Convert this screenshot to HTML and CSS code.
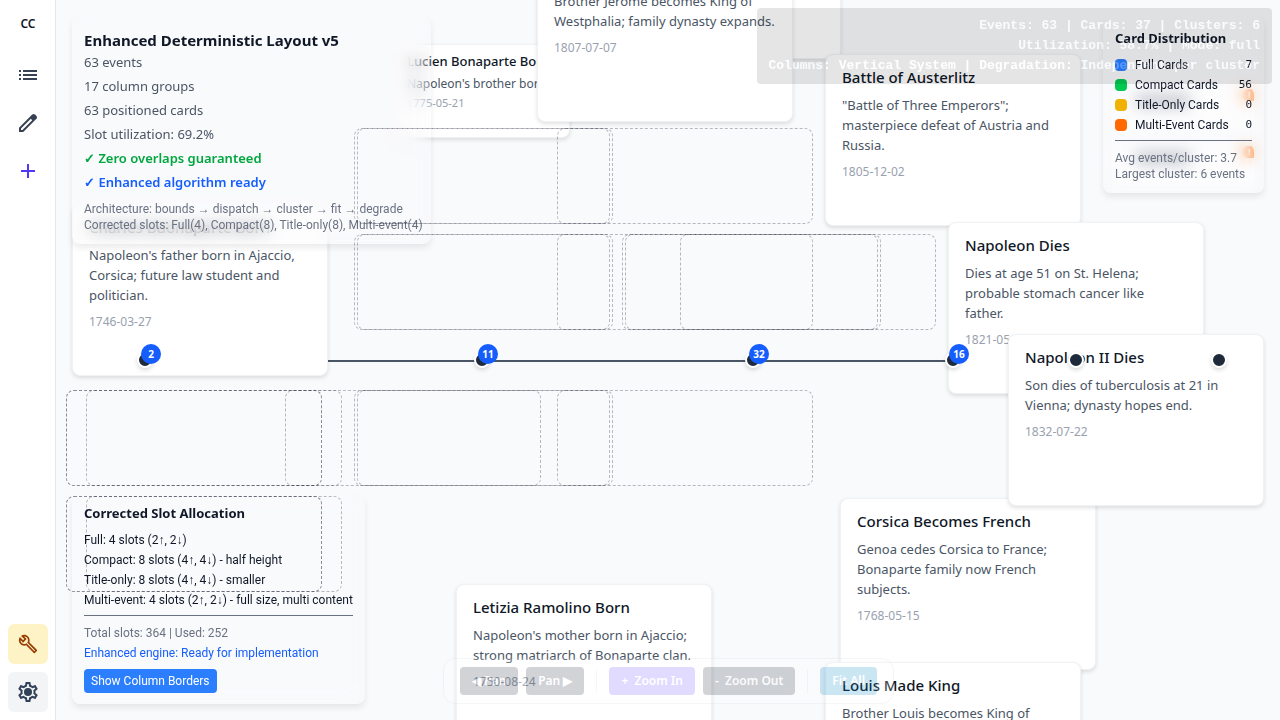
FILE: index.html
```html
<!DOCTYPE html>
<html lang="en">
<head>
<meta charset="utf-8">
<meta name="viewport" content="width=device-width, initial-scale=1">
<title>Timeline</title>
<link rel="stylesheet" href="styles.css">
</head>
<body>
<div class="app">
  <nav class="rail" aria-label="Main">
    <div class="rail-group">
      <span class="brand">CC</span>
      <button class="rail-btn" type="button" aria-label="Events">
        <svg viewBox="0 0 24 24"><path d="M3 7h2v2H3zm0 4h2v2H3zm0 4h2v2H3zM7 7h14v2H7zm0 4h14v2H7zm0 4h14v2H7z"/></svg>
      </button>
      <button class="rail-btn" type="button" aria-label="Edit">
        <svg viewBox="0 0 24 24"><path d="M5 19h1.425L16.2 9.225 14.775 7.8 5 17.575zm-2 2v-4.25L16.2 3.575a2 2 0 0 1 .663-.425q.363-.15.762-.15t.775.15.65.45L20.425 5q.3.275.438.65t.137.75q0 .4-.137.763a1.9 1.9 0 0 1-.438.662L7.25 21z"/></svg>
      </button>
      <button class="rail-btn rail-add" type="button" aria-label="Add event">
        <svg viewBox="0 0 24 24"><path d="M11 13H5v-2h6V5h2v6h6v2h-6v6h-2z"/></svg>
      </button>
    </div>
    <div class="rail-group rail-bottom">
      <button class="rail-btn rail-dev" type="button" aria-label="Developer panel">
        <svg viewBox="0 0 24 24"><path d="M22.61 19l-9.08-9.09c.93-2.34.45-5.1-1.44-7C9.79.61 6.21.4 3.66 2.26L7.5 6.11 6.08 7.52 2.25 3.69C.39 6.23.6 9.82 2.9 12.11c1.86 1.86 4.57 2.35 6.89 1.48l9.11 9.11c.39.39 1.02.39 1.41 0l2.3-2.3c.4-.38.4-1.01 0-1.4zm-3 1.59l-9.46-9.46c-.61.45-1.29.72-2 .82-1.36.2-2.79-.21-3.83-1.25C3.37 9.76 2.93 8.5 3 7.26l3.09 3.09 4.24-4.24-3.09-3.09c1.24-.07 2.49.37 3.44 1.31 1.08 1.08 1.49 2.57 1.24 3.96-.12.71-.42 1.37-.88 1.96l9.45 9.45-.88.89z"/></svg>
      </button>
      <button class="rail-btn rail-settings" type="button" aria-label="Settings">
        <svg viewBox="0 0 24 24"><path d="M19.43 12.98c.04-.32.07-.64.07-.98 0-.34-.03-.66-.07-.98l2.11-1.65c.19-.15.24-.42.12-.64l-2-3.46c-.09-.16-.26-.25-.44-.25-.06 0-.12.01-.17.03l-2.49 1c-.52-.4-1.08-.73-1.69-.98l-.38-2.65C14.46 2.18 14.25 2 14 2h-4c-.25 0-.46.18-.49.42l-.38 2.65c-.61.25-1.17.59-1.69.98l-2.49-1c-.06-.02-.12-.03-.18-.03-.17 0-.34.09-.43.25l-2 3.46c-.13.22-.07.49.12.64l2.11 1.65c-.04.32-.07.65-.07.98s.03.66.07.98l-2.11 1.65c-.19.15-.24.42-.12.64l2 3.46c.09.16.26.25.44.25.06 0 .12-.01.17-.03l2.49-1c.52.4 1.08.73 1.69.98l.38 2.65c.03.24.24.42.49.42h4c.25 0 .46-.18.49-.42l.38-2.65c.61-.25 1.17-.59 1.69-.98l2.49 1c.06.02.12.03.18.03.17 0 .34-.09.43-.25l2-3.46c.12-.22.07-.49-.12-.64l-2.11-1.65zm-1.98-1.71c.04.31.05.52.05.73 0 .21-.02.43-.05.73l-.14 1.13.89.7 1.08.84-.7 1.21-1.27-.51-1.04-.42-.9.68c-.43.32-.84.56-1.25.73l-1.06.43-.16 1.13-.2 1.35h-1.4l-.19-1.35-.16-1.13-1.06-.43c-.43-.18-.83-.41-1.23-.71l-.91-.7-1.06.43-1.27.51-.7-1.21 1.08-.84.89-.7-.14-1.13c-.03-.31-.05-.54-.05-.74s.02-.43.05-.73l.14-1.13-.89-.7-1.08-.84.7-1.21 1.27.51 1.04.42.9-.68c.43-.32.84-.56 1.25-.73l1.06-.43.16-1.13.2-1.35h1.39l.19 1.35.16 1.13 1.06.43c.43.18.83.41 1.23.71l.91.7 1.06-.43 1.27-.51.7 1.21-1.07.85-.89.7.14 1.13z"/><circle cx="12" cy="12" r="4"/></svg>
      </button>
    </div>
  </nav>

  <main class="canvas">
    <div class="axis"></div>

    <article class="card compact at-lucien"><h3>Lucien Bonaparte Born</h3><p>Napoleon's brother born.</p><time>1775-05-21</time></article>
    <article class="card at-back"></article>
    <article class="card at-jerome"><h3>Jerome Made King</h3><p>Brother Jerome becomes King of Westphalia; family dynasty expands.</p><time>1807-07-07</time></article>
    <article class="card at-austerlitz"><h3>Battle of Austerlitz</h3><p>"Battle of Three Emperors"; masterpiece defeat of Austria and Russia.</p><time>1805-12-02</time></article>
    <article class="card at-charles"><h3>Charles Buonaparte Born</h3><p>Napoleon's father born in Ajaccio, Corsica; future law student and politician.</p><time>1746-03-27</time></article>
    <article class="card at-dies"><h3>Napoleon Dies</h3><p>Dies at age 51 on St. Helena; probable stomach cancer like<br>father.</p><time>1821-05-05</time></article>
    <article class="card at-corsica"><h3>Corsica Becomes French</h3><p>Genoa cedes Corsica to France; Bonaparte family now French subjects.</p><time>1768-05-15</time></article>
    <article class="card at-second"><h3>Napoleon II Dies</h3><p>Son dies of tuberculosis at 21 in Vienna; dynasty hopes end.</p><time>1832-07-22</time></article>
    <article class="card at-letizia"><h3>Letizia Ramolino Born</h3><p>Napoleon's mother born in Ajaccio; strong matriarch of Bonaparte clan.</p><time>1750-08-24</time></article>
    <article class="card at-louis"><h3>Louis Made King</h3><p>Brother Louis becomes King of Holland.</p><time>1806-06-05</time></article>
    <div class="mini at-mini-a"><i class="mini-title"></i><b class="flag">!</b></div>
    <div class="mini at-mini-b"><i class="mini-title"></i><b class="flag">!</b></div>

    <span class="node n1"><b>2</b></span>
    <span class="node n2"><b>11</b></span>
    <span class="node n3"><b>32</b></span>
    <span class="node n4"><b>16</b></span>
    <span class="node n5"></span>
    <span class="node n6"></span>

    <section class="panel panel-info">
      <h2>Enhanced Deterministic Layout v5</h2>
      <ul class="stats">
        <li>63 events</li>
        <li>17 column groups</li>
        <li>63 positioned cards</li>
        <li>Slot utilization: 69.2%</li>
        <li class="ok">✓ Zero overlaps guaranteed</li>
        <li class="ready">✓ Enhanced algorithm ready</li>
      </ul>
      <p class="note">Architecture: bounds → dispatch → cluster → fit → degrade<br>Corrected slots: Full(4), Compact(8), Title-only(8), Multi-event(4)</p>
    </section>

    <section class="panel panel-dist">
      <h2>Card Distribution</h2>
      <dl class="dist">
        <div><dt class="full">Full Cards</dt><dd>7</dd></div>
        <div><dt class="comp">Compact Cards</dt><dd>56</dd></div>
        <div><dt class="titl">Title-Only Cards</dt><dd>0</dd></div>
        <div><dt class="mult">Multi-Event Cards</dt><dd>0</dd></div>
      </dl>
      <p class="note ruled">Avg events/cluster: 3.7<br>Largest cluster: 6 events</p>
    </section>

    <section class="panel panel-slots">
      <h2>Corrected Slot Allocation</h2>
      <ul class="alloc">
        <li>Full: 4 slots (2↑, 2↓)</li>
        <li>Compact: 8 slots (4↑, 4↓) - half height</li>
        <li>Title-only: 8 slots (4↑, 4↓) - smaller</li>
        <li>Multi-event: 4 slots (2↑, 2↓) - full size, multi content</li>
      </ul>
      <div class="totals ruled">
        <p>Total slots: 364 | Used: 252</p>
        <p class="ready">Enhanced engine: Ready for implementation</p>
      </div>
      <button class="borders-btn" type="button">Show Column Borders</button>
    </section>

    <i class="slot r1 c354"></i><i class="slot r1 c357"></i><i class="slot r1 c557"></i>
    <i class="slot r2 c354"></i><i class="slot r2 c357"></i><i class="slot r2 c557"></i>
    <i class="slot r2 c622"></i><i class="slot r2 c625"></i><i class="slot r2 c680"></i>
    <i class="slot r3 c66"></i><i class="slot r3 c66"></i><i class="slot r3 c86"></i><i class="slot r3 c285"></i>
    <i class="slot r3 c354"></i><i class="slot r3 c357"></i><i class="slot r3 c557"></i>
    <i class="slot r4 c66"></i><i class="slot r4 c66"></i><i class="slot r4 c86"></i>

    <div class="telemetry">
      <div>Events: 63 | Cards: 37 | Clusters: 6</div>
      <div>Utilization: 58.7% | Mode: full</div>
      <div>Columns: Vertical System | Degradation: Independent per cluster</div>
    </div>

    <div class="toolbar" role="toolbar" aria-label="Timeline navigation">
      <button type="button">◀ Pan</button>
      <button type="button">Pan ▶</button>
      <span class="sep"></span>
      <button type="button" class="in">+&nbsp; Zoom In</button>
      <button type="button">-&nbsp; Zoom Out</button>
      <span class="sep"></span>
      <button type="button" class="fit">Fit All</button>
    </div>
  </main>
</div>
</body>
</html>
```
FILE: styles.css
```css
* { box-sizing: border-box; }
body, h2, h3, p, ul, dl, dd { margin: 0; padding: 0; }
ul { list-style: none; }
body {
  font-family: "Noto Sans", "Open Sans", sans-serif;
  font-size: 13px;
  line-height: 20px;
  color: #101828;
  background: #f9fafc;
}
button { font: inherit; border: 0; padding: 0; cursor: pointer; }

.app { display: flex; height: 100vh; overflow: hidden; }

/* Left rail */
.rail {
  flex: none;
  width: 56px;
  display: flex;
  flex-direction: column;
  justify-content: space-between;
  padding: 8px 7px 8px 8px;
  background: #fff;
  border-right: 1px solid #e5e7eb;
}
.rail-group { display: flex; flex-direction: column; align-items: center; gap: 8px; }
.brand {
  height: 32px;
  margin-bottom: 7px;
  line-height: 32px;
  font-size: 12px;
  font-weight: 600;
}
.rail-btn {
  width: 40px;
  height: 40px;
  display: grid;
  place-items: center;
  border-radius: 6px;
  background: none;
  color: #364153;
}
.rail-btn svg { width: 24px; height: 24px; fill: currentColor; }
.rail-add { color: #4f39f6; }
.rail-dev { background: #fef3c6; color: #973c00; }
.rail-dev svg { width: 20px; height: 20px; }
.rail-settings { background: #f3f4f6; color: #314158; }

/* Timeline canvas */
.canvas { position: relative; flex: 1; min-width: 0; overflow: hidden; }
.axis {
  position: absolute;
  left: 16px;
  right: 16px;
  top: 360px;
  height: 2px;
  background: #4a5565;
}
.card {
  position: absolute;
  width: 256px;
  height: 172px;
  padding: 12px 16px;
  background: #fff;
  border: 1px solid #f0f2f4;
  border-radius: 8px;
  box-shadow: 0 2px 4px rgba(0, 0, 0, .12);
}
.card h3 { font-size: 15px; line-height: 20px; font-weight: 500; margin-bottom: 8px; }
.card p { color: #4a5565; }
.card time { display: block; margin-top: 8px; font-size: 12px; line-height: 18px; color: #99a1af; }
.compact { width: 176px; height: 94px; padding: 6px 12px; overflow: hidden; white-space: nowrap; }
.compact h3 { font-size: 13px; margin-bottom: 4px; }
.compact p { font-size: 12px; line-height: 18px; }
.compact time { margin-top: 1px; font-size: 11px; }

.at-lucien { left: 338px; top: 44px; }
.at-back { left: 529px; top: -113px; }
.at-jerome { left: 481px; top: -50px; }
.at-austerlitz { left: 769px; top: 54px; }
.at-charles { left: 16px; top: 204px; }
.at-dies { left: 892px; top: 222px; }
.at-corsica { left: 784px; top: 498px; }
.at-second { left: 952px; top: 334px; }
.at-letizia { left: 400px; top: 584px; }
.at-louis { left: 769px; top: 662px; }

.mini {
  position: absolute;
  width: 140px;
  height: 42px;
  background: #fff;
  border-radius: 8px;
  overflow: hidden;
}
.at-mini-a { left: 1058px; top: 87px; }
.at-mini-b { left: 1058px; top: 144px; }
.mini-title { position: absolute; left: 22px; top: 10px; width: 54px; height: 8px; background: #6a7282; }
.flag {
  position: absolute;
  right: -4px;
  top: 2px;
  width: 16px;
  height: 12px;
  border-radius: 6px;
  background: #ff6900;
  color: #fff;
  font-size: 9px;
  line-height: 12px;
  padding-left: 6px;
}

.node {
  position: absolute;
  top: 352px;
  width: 16px;
  height: 16px;
  border: 2px solid #fff;
  border-radius: 50%;
  background: #1e2939;
  box-shadow: 0 2px 4px rgba(0, 0, 0, .15);
}
.node b {
  position: absolute;
  left: 2px;
  top: -10px;
  width: 20px;
  height: 20px;
  border-radius: 50%;
  background: #155dfc;
  color: #fff;
  font-size: 10px;
  line-height: 20px;
  text-align: center;
}
.n1 { left: 81px; }
.n2 { left: 418px; }
.n3 { left: 689px; }
.n4 { left: 889px; }
.n5 { left: 1012px; }
.n6 { left: 1155px; }

/* Slot outlines */
.slot {
  position: absolute;
  width: 256px;
  height: 96px;
  border: 1px dashed rgba(30, 35, 50, .3);
  border-radius: 8px;
}
.r1 { top: 128px; }
.r2 { top: 234px; }
.r3 { top: 390px; }
.r4 { top: 496px; }
.c66 { left: 10px; }
.c86 { left: 30px; }
.c285 { left: 229px; }
.c354 { left: 298px; }
.c357 { left: 301px; }
.c557 { left: 501px; }
.c622 { left: 566px; }
.c625 { left: 569px; }
.c680 { left: 624px; }

/* Floating panels */
.panel {
  position: absolute;
  isolation: isolate;
  padding: 12px 12px 11px;
  border-radius: 8px;
  box-shadow: 0 4px 6px rgba(0, 0, 0, .08);
  white-space: nowrap;
}
.panel::before {
  content: "";
  position: absolute;
  inset: 0;
  z-index: -1;
  border-radius: 8px;
  background: rgba(249, 250, 252, .4);
  backdrop-filter: blur(8px);
  mask-image: linear-gradient(to left, rgba(0, 0, 0, .3), #000 24px), linear-gradient(to top, rgba(0, 0, 0, .7), #000 20px);
  mask-composite: intersect;
}
.panel h2 { font-weight: 700; }
.panel-info { left: 16px; top: 16px; padding-right: 8px; }
.panel-info h2 { font-size: 15px; line-height: 24px; }
.stats { line-height: 24px; margin-top: -2px; color: #4a5565; }
.ok { color: #00a63e; font-weight: 600; }
.ready { color: #155dfc; }
.stats .ready { font-weight: 600; }
.note, .dist, .alloc, .totals, .borders-btn { font-family: Roboto, "Noto Sans", sans-serif; font-size: 12px; }
.note { line-height: 16px; color: #6a7282; }
.stats + .note { margin-top: 7px; }
.ruled { border-top: 1px solid #6a7282; }

.panel-dist { right: 16px; top: 16px; width: 161px; }
.panel-dist h2 { font-size: 13px; margin-bottom: 7px; }
.dist div { display: flex; justify-content: space-between; }
.dist dt { display: flex; align-items: center; gap: 8px; }
.dist dt::before { content: ""; width: 12px; height: 12px; border-radius: 4px; background: currentColor; }
.dist dt.full::before { background: #2b7fff; }
.dist dt.comp::before { background: #00c950; }
.dist dt.titl::before { background: #f0b100; }
.dist dt.mult::before { background: #ff6900; }
.dist dd { font-family: "DejaVu Sans Mono", monospace; font-size: 11px; }
.panel-dist .note { margin-top: 5px; padding-top: 9px; }

.panel-slots { left: 16px; bottom: 16px; padding-top: 8px; }
.panel-slots h2 { font-size: 13px; margin-bottom: 7px; }
.totals { margin-top: 5px; padding-top: 7px; color: #6a7282; }
.totals .ready { color: #155dfc; }
.borders-btn {
  margin-top: 6px;
  height: 24px;
  padding: 0 7px;
  border-radius: 4px;
  background: #2b7fff;
  color: #fff;
}

/* Faded overlays */
.telemetry {
  position: absolute;
  right: 8px;
  top: 8px;
  padding: 8px 12px;
  border-radius: 4px;
  background: rgba(0, 0, 0, .5);
  color: #fff;
  opacity: .2;
  text-align: right;
  font-family: "Liberation Mono", monospace;
  font-size: 13px;
  font-weight: 700;
}
.toolbar {
  position: absolute;
  left: 387px;
  bottom: 16px;
  display: flex;
  align-items: center;
  gap: 8px;
  padding: 8px 16px;
  border: 1px solid #d1d5dc;
  border-radius: 12px;
  background: #fff;
  opacity: .2;
}
.toolbar button {
  height: 28px;
  padding: 0 12px;
  border-radius: 4px;
  background: #1e2939;
  color: #fff;
  font-size: 12px;
  font-weight: 600;
}
.toolbar .in { background: #6a50ff; }
.toolbar .fit { background: #0284c7; }
.sep { width: 1px; height: 24px; margin: 0 4px; background: #d1d5dc; }
```
